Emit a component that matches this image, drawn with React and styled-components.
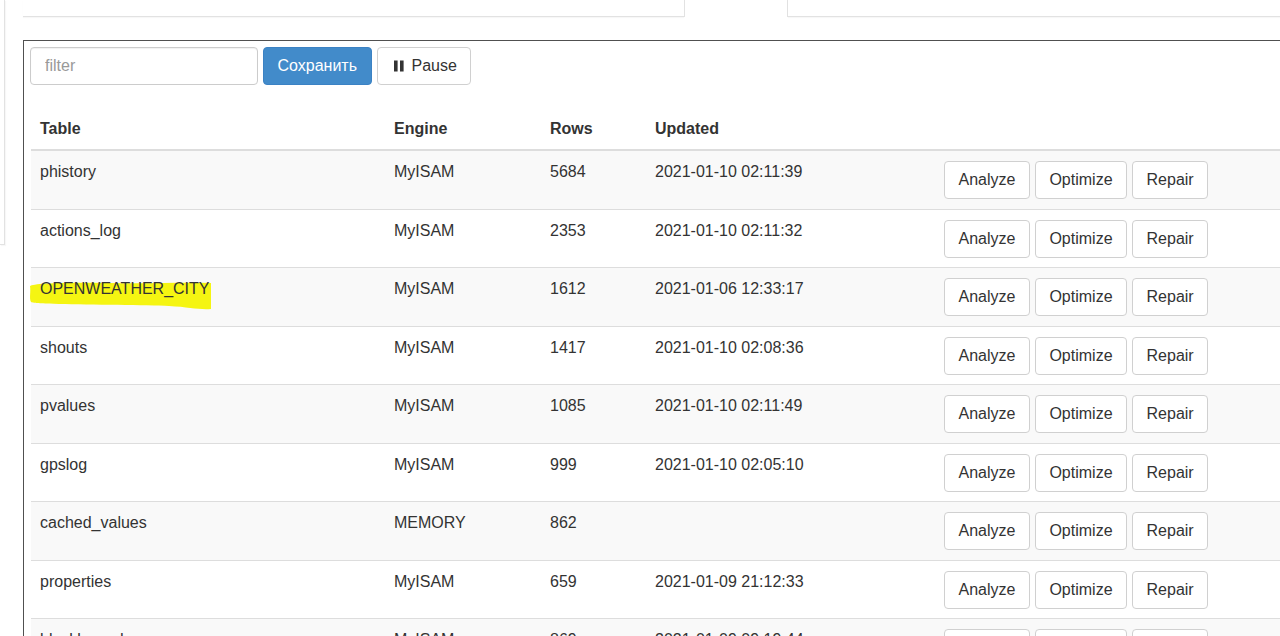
import React from "react";
import styled, { createGlobalStyle } from "styled-components";

const GlobalStyle = createGlobalStyle`
  html, body {
    margin: 0;
    padding: 0;
    background: #fff;
    overflow: hidden;
  }
  body {
    font-family: "Liberation Sans", Arial, Helvetica, sans-serif;
    font-size: 16px;
    color: #333;
  }
`;

const Page = styled.div`
  display: flex;
  align-items: flex-start;
  width: 1320px;
`;

const Sidebar = styled.div`
  width: 4px;
  height: 244px;
  border-right: 1px solid #e2e2e2;
  border-bottom: 1px solid #e2e2e2;
  box-shadow: 1px 1px 1px rgba(0, 0, 0, 0.03);
  flex-shrink: 0;
`;

const Main = styled.div`
  flex: 1;
  margin-left: 18px;
  display: flex;
  flex-direction: column;
`;

const Tabs = styled.div`
  display: flex;
  height: 17px;
`;

const TabFill = styled.div`
  width: ${(p) => (p.width ? `${p.width}px` : "auto")};
  flex: ${(p) => (p.width ? "none" : "1")};
  border-bottom: 1px solid #e2e2e2;
  box-shadow: 0 1px 1px rgba(0, 0, 0, 0.03);
`;

const ActiveTab = styled.div`
  width: 104px;
  border-left: 1px solid #e2e2e2;
  border-right: 1px solid #e2e2e2;
  box-sizing: border-box;
`;

const Panel = styled.div`
  margin-top: 23px;
  border-top: 1px solid #505050;
  border-left: 1px solid #505050;
  padding: 6px 0 0 6px;
`;

const Toolbar = styled.div`
  display: flex;
  gap: 5px;
  height: 38px;
  margin-bottom: 25px;
`;

const FilterInput = styled.input`
  width: 228px;
  height: 38px;
  box-sizing: border-box;
  border: 1px solid #ccc;
  border-radius: 4px;
  padding: 0 14px;
  font-family: "Liberation Sans", Arial, sans-serif;
  font-size: 16px;
  color: #555;
  box-shadow: inset 0 1px 1px rgba(0, 0, 0, 0.06);
  outline: none;
  &::placeholder {
    color: #999;
  }
`;

const Btn = styled.button`
  height: 38px;
  box-sizing: border-box;
  padding: 0 13.5px;
  border-radius: 4px;
  border: 1px solid ${(p) => (p.primary ? "#3b82c4" : "#d0d0d0")};
  background: ${(p) => (p.primary ? "#428bca" : "#fff")};
  color: ${(p) => (p.primary ? "#fff" : "#333")};
  font-family: "Liberation Sans", Arial, sans-serif;
  font-size: 16px;
  line-height: 22px;
  display: inline-flex;
  align-items: center;
  gap: 8px;
  cursor: pointer;
  white-space: nowrap;
`;

const PauseBtn = styled(Btn)`
  padding-left: 16px;
`;

const Table = styled.table`
  width: 100%;
  margin-left: 1px;
  border-collapse: collapse;
  table-layout: fixed;
`;

const Th = styled.th`
  text-align: left;
  font-weight: bold;
  padding: 8px 9px 9px;
  line-height: 22px;
  border-bottom: 2px solid #ddd;
`;

const Tr = styled.tr`
  background: ${(p) => (p.striped ? "#f9f9f9" : "#fff")};
`;

const Td = styled.td`
  vertical-align: top;
  padding: ${(p) => (p.actions ? "10px 9px 9.5px" : "11px 9px 9px")};
  line-height: 20px;
  border-top: 1px solid #ddd;
  white-space: nowrap;
`;

const Actions = styled.div`
  display: flex;
  gap: 5px;
`;

const Marked = styled.span`
  position: relative;
  display: inline-block;
  isolation: isolate;
`;

const Marker = styled.svg`
  position: absolute;
  left: -11px;
  top: 3px;
  z-index: -1;
`;

const PauseIcon = () => (
  <svg width="10" height="12" viewBox="0 0 10 12">
    <rect x="0" y="0.5" width="3.6" height="11" fill="#333" />
    <rect x="6" y="0.5" width="3.6" height="11" fill="#333" />
  </svg>
);

const rows = [
  ["phistory", "MyISAM", "5684", "2021-01-10 02:11:39"],
  ["actions_log", "MyISAM", "2353", "2021-01-10 02:11:32"],
  ["OPENWEATHER_CITY", "MyISAM", "1612", "2021-01-06 12:33:17", true],
  ["shouts", "MyISAM", "1417", "2021-01-10 02:08:36"],
  ["pvalues", "MyISAM", "1085", "2021-01-10 02:11:49"],
  ["gpslog", "MyISAM", "999", "2021-01-10 02:05:10"],
  ["cached_values", "MEMORY", "862", ""],
  ["properties", "MyISAM", "659", "2021-01-09 21:12:33"],
  ["blockly_code", "MyISAM", "869", "2021-01-09 09:19:44"],
];

const App = () => {
  return (
    <>
      <GlobalStyle />
      <Page>
        <Sidebar />
        <Main>
          <Tabs>
            <TabFill width={661} />
            <ActiveTab />
            <TabFill />
          </Tabs>
          <Panel>
            <Toolbar>
              <FilterInput placeholder="filter" />
              <Btn primary>Сохранить</Btn>
              <PauseBtn>
                <PauseIcon />
                Pause
              </PauseBtn>
            </Toolbar>
            <Table>
              <colgroup>
                <col style={{ width: 354 }} />
                <col style={{ width: 156 }} />
                <col style={{ width: 105 }} />
                <col style={{ width: 289 }} />
                <col />
              </colgroup>
              <thead>
                <tr>
                  <Th>Table</Th>
                  <Th>Engine</Th>
                  <Th>Rows</Th>
                  <Th>Updated</Th>
                  <Th></Th>
                </tr>
              </thead>
              <tbody>
                {rows.map((row, index) => (
                  <Tr key={row[0]} striped={index % 2 === 0}>
                    <Td>
                      {row[4] ? (
                        <Marked>
                          <Marker width="182" height="28" viewBox="0 0 182 28">
                            <path
                              d="M1 4 C 4 1, 40 0, 80 1 S 150 0, 182 1 L 182 27 C 170 28, 160 25, 140 24 S 60 23, 30 22 S 6 21, 2 20 C 0 16, 2 10, 1 4 Z"
                              fill="#f5f512"
                            />
                          </Marker>
                          {row[0]}
                        </Marked>
                      ) : (
                        row[0]
                      )}
                    </Td>
                    <Td>{row[1]}</Td>
                    <Td>{row[2]}</Td>
                    <Td>{row[3]}</Td>
                    <Td actions>
                      <Actions>
                        <Btn>Analyze</Btn>
                        <Btn>Optimize</Btn>
                        <Btn>Repair</Btn>
                      </Actions>
                    </Td>
                  </Tr>
                ))}
              </tbody>
            </Table>
          </Panel>
        </Main>
      </Page>
    </>
  );
};

export default App;
